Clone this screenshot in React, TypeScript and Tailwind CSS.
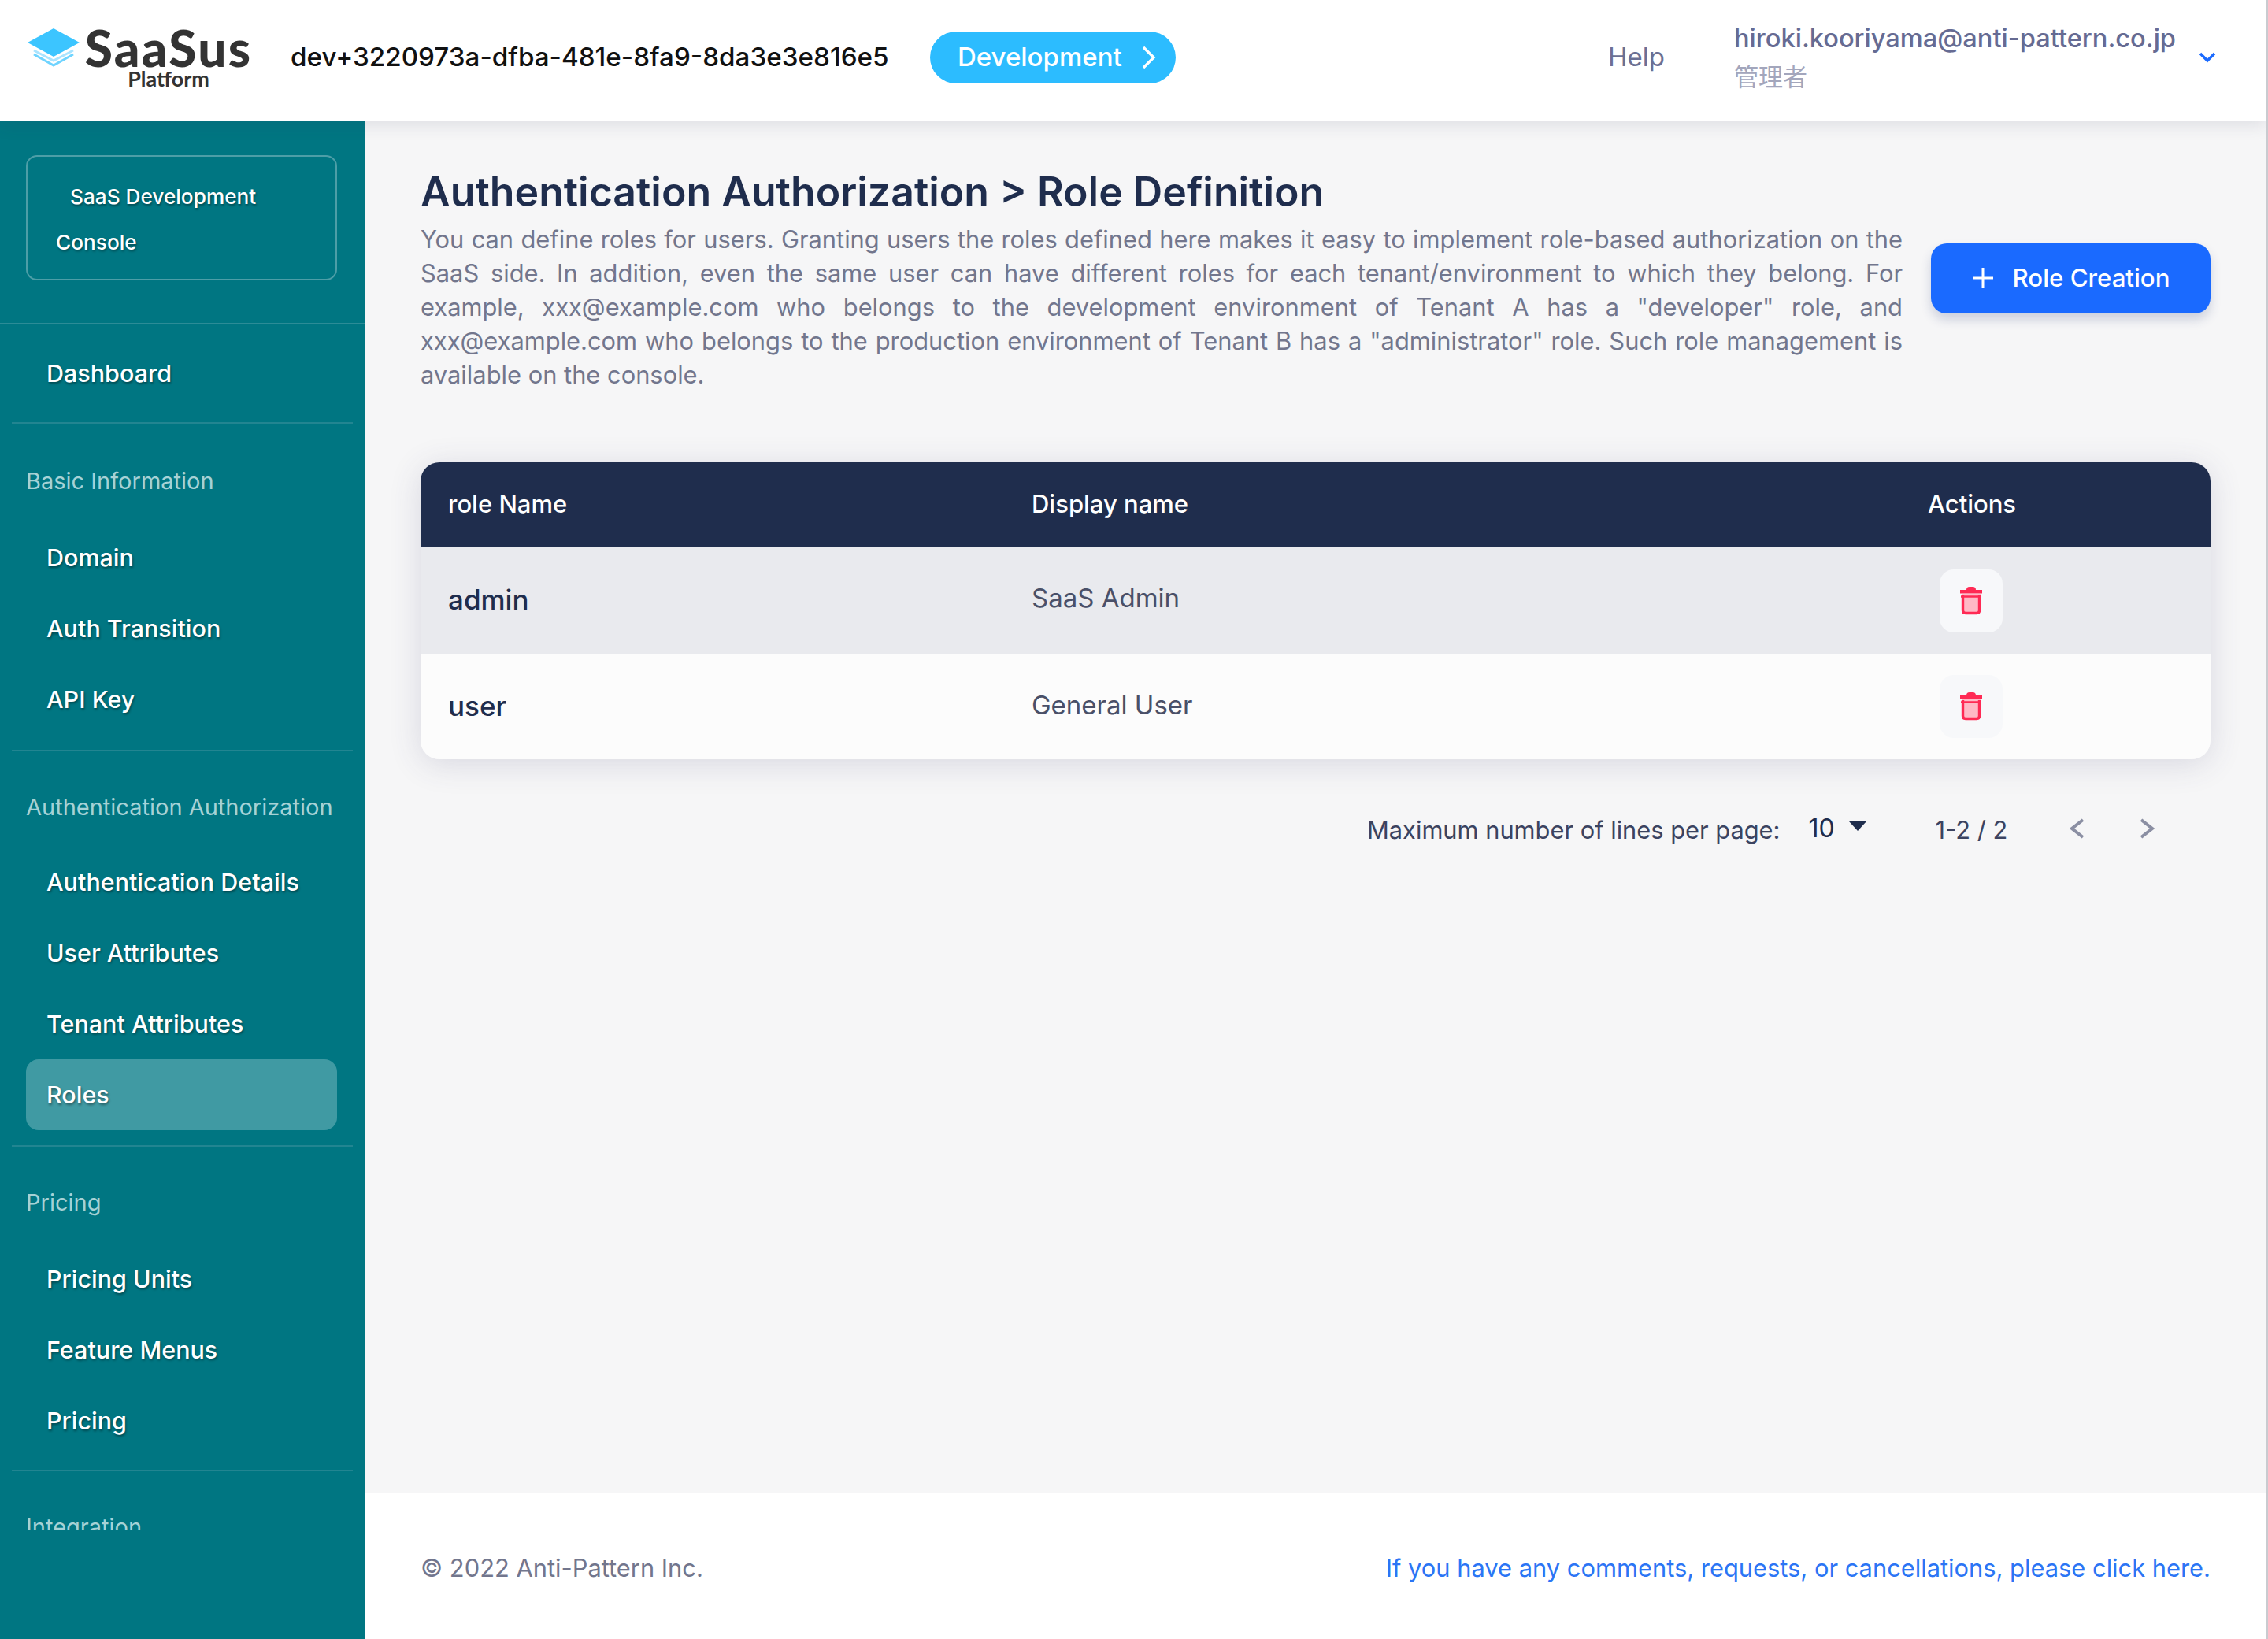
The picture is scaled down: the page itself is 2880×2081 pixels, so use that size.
import React from "react";

const font = { fontFamily: "Inter, 'Noto Sans CJK JP', sans-serif" };

function Logo() {
  return (
    <div className="flex items-start w-[320px] h-[90px] pl-[34px] pt-[8px] shrink-0">
      <svg width="68" height="50" viewBox="0 0 68 50" className="shrink-0">
        <path d="M9 28 L34 41 L59 28" fill="none" stroke="#a9e4ff" strokeWidth="3" />
        <path d="M9 33 L34 47 L59 33" fill="none" stroke="#6fd4ff" strokeWidth="3" />
        <path d="M34 0 L67 18 L34 36 L1 18 Z" fill="#3cc5ff" />
      </svg>
      <div className="flex flex-col items-center ml-[6px] w-[212px] shrink-0">
        <span className="text-[64px] leading-[50px] font-black text-[#333333] tracking-[2.2px]" style={{ fontFamily: "Lato, sans-serif" }}>SaaSus</span>
        <span className="text-[27px] leading-[24px] mt-[2px] font-bold text-[#333333]" style={{ fontFamily: "Lato, sans-serif" }}>Platform</span>
      </div>
    </div>
  );
}

function Item({ label, active }: { label: string; active?: boolean }) {
  return (
    <div className={`h-[90px] ml-[33px] mr-[35px] pl-[26px] flex items-center rounded-[16px] text-[30.5px] font-medium text-white [text-shadow:1px_2px_3px_rgba(0,0,0,0.4)] ${active ? "bg-[#409aa3]" : ""}`}>
      {label}
    </div>
  );
}

function Label({ label, top, bottom }: { label: string; top: string; bottom: string }) {
  return (
    <div className={`h-[52px] ${top} ${bottom} pl-[33px] flex items-center text-[29px] text-[#a6d2d6] whitespace-nowrap`}>
      {label}
    </div>
  );
}

function Divider({ top }: { top: string }) {
  return <div className={`h-[2px] mx-[15px] ${top} bg-[#228591]`} />;
}

function Trash() {
  return (
    <div className="w-[80px] h-[80px] rounded-[18px] flex items-center justify-center bg-[#f7f8fa] mb-[1px]">
      <svg width="30" height="38" viewBox="0 0 30 38">
        <path d="M3 10 H27 V31 Q27 36 22 36 H8 Q3 36 3 31 Z" fill="#ffb9c6" />
        <path d="M4.5 11 V31 Q4.5 34.5 8 34.5 H22 Q25.5 34.5 25.5 31 V11" fill="none" stroke="#ff2a54" strokeWidth="3.4" />
        <path d="M2 13.5 H28" stroke="#ff2a54" strokeWidth="2.5" />
        <path d="M1 5 H29 V9.5 H1 Z M9 5 Q9 1 13 1 H17 Q21 1 21 5 Z" fill="#ff2a54" />
      </svg>
    </div>
  );
}

function Row({ name, display, bg, nameShift, displayShift }: { name: string; display: string; bg: string; nameShift: string; displayShift: string }) {
  return (
    <div className={`flex items-center w-full ${bg}`}>
      <div className={`w-[741px] pl-[35px] text-[35px] font-medium text-[#1f2d4d] ${nameShift}`}>{name}</div>
      <div className={`w-[1188px] pl-[35px] text-[33px] text-[#4a5068] ${displayShift}`}>{display}</div>
      <Trash />
    </div>
  );
}

export default function App() {
  return (
    <div className="w-[2880px] h-[2081px] flex flex-col overflow-hidden bg-white border-r-[2px] border-[#c9cbd0]" style={font}>
      <header className="h-[153px] shrink-0 relative z-10 flex items-center pb-[7px] bg-white shadow-[0_6px_20px_rgba(50,55,90,0.12)]">
        <Logo />
        <div className="ml-[49px] text-[33.2px] font-medium text-[#111111] w-[812px] whitespace-nowrap">dev+3220973a-dfba-481e-8fa9-8da3e3e816e5</div>
        <div className="w-[312px] h-[66px] rounded-[33px] bg-[#2cbcff] flex items-center pl-[35px] text-[33px] font-medium text-white">
          Development
          <svg width="20" height="32" viewBox="0 0 20 32" className="ml-[24px]"><path d="M3 3 L16 16 L3 29" fill="none" stroke="#fff" strokeWidth="3.4" /></svg>
        </div>
        <div className="ml-[549px] text-[33px] text-[#6b7094] w-[160px]">Help</div>
        <div className="flex flex-col w-[580px]">
          <span className="text-[32.6px] leading-[50px] font-medium text-[#666b93] whitespace-nowrap">hiroki.kooriyama@anti-pattern.co.jp</span>
          <span className="text-[31px] leading-[50px] text-[#a3a6bc]">管理者</span>
        </div>
        <svg width="24" height="16" viewBox="0 0 24 16" className="ml-[9px]"><path d="M3 3 L12 12 L21 3" fill="none" stroke="#1a6aff" strokeWidth="3.4" /></svg>
      </header>

      <div className="flex flex-1 min-h-0">
        <aside className="w-[463px] shrink-0 bg-[#007682] flex flex-col">
          <div className="h-[1790px] overflow-hidden">
            <div className="pt-[44px] pb-[54px] pl-[33px] pr-[35px] border-b-[2px] border-[#2c8c97]">
              <div className="h-[159px] rounded-[14px] border-[2px] border-[#4d9ea7] pl-[36px] pt-[22px] text-[26.2px] font-medium leading-[58px] text-white [text-shadow:1px_2px_3px_rgba(0,0,0,0.4)]">
                <div className="pl-[18px]">SaaS Development</div>
                <div>Console</div>
              </div>
            </div>
            <div className="pt-[17px]"><Item label="Dashboard" /></div>
            <Divider top="mt-[17px]" />
            <Label label="Basic Information" top="mt-[47px]" bottom="mb-[26px]" />
            <Item label="Domain" />
            <Item label="Auth Transition" />
            <Item label="API Key" />
            <Divider top="mt-[19px]" />
            <Label label="Authentication Authorization" top="mt-[45px]" bottom="mb-[24px]" />
            <Item label="Authentication Details" />
            <Item label="User Attributes" />
            <Item label="Tenant Attributes" />
            <Item label="Roles" active />
            <Divider top="mt-[19px]" />
            <Label label="Pricing" top="mt-[45px]" bottom="mb-[26px]" />
            <Item label="Pricing Units" />
            <Item label="Feature Menus" />
            <Item label="Pricing" />
            <Divider top="mt-[17px]" />
            <Label label="Integration" top="mt-[45px]" bottom="mb-[26px]" />
          </div>
        </aside>

        <div className="flex-1 min-w-0 flex flex-col">
          <main className="flex-1 bg-[#f6f6f7] pl-[71px] pr-[71px] pt-[56px]">
            <h1 className="text-[51.8px] leading-[68px] font-semibold text-[#1f2d4d] whitespace-nowrap">Authentication Authorization &gt; Role Definition</h1>
            <div className="flex items-center mt-[5px] gap-[36px]">
              <p className="w-[1882px] shrink-0 text-[30.85px] leading-[43px] text-[#72768d] text-justify">
                You can define roles for users. Granting users the roles defined here makes it easy to implement role-based authorization on the SaaS side. In addition, even the same user can have different roles for each tenant/environment to which they belong. For example, xxx@example.com who belongs to the development environment of Tenant A has a "developer" role, and xxx@example.com who belongs to the production environment of Tenant B has a "administrator" role. Such role management is available on the console.
              </p>
              <button className="w-[355px] h-[89px] mb-[73px] rounded-[20px] bg-[#1a6aff] flex items-center justify-center gap-[24px] text-[31.2px] font-medium text-white shadow-[0_8px_14px_rgba(40,60,120,0.2)]">
                <svg width="28" height="28" viewBox="0 0 28 28"><path d="M14 1 V27 M1 14 H27" stroke="#fff" strokeWidth="3" /></svg>
                Role Creation
              </button>
            </div>
            <div className="mt-[90px] rounded-[24px] overflow-hidden shadow-[0_6px_40px_rgba(60,65,110,0.16)]">
              <div className="h-[108px] flex items-center bg-[#1f2d4d] text-[31px] font-medium text-white border-b-[1px] border-[#6f7890]">
                <div className="w-[741px] pl-[35px]">role Name</div>
                <div className="w-[1173px] pl-[35px]">Display name</div>
                <div>Actions</div>
              </div>
              <div className="h-[136px] flex"><Row name="admin" display="SaaS Admin" bg="bg-[#e9eaee]" nameShift="mb-[3px]" displayShift="mb-[6px]" /></div>
              <div className="h-[133px] flex"><Row name="user" display="General User" bg="bg-[#fcfcfc]" nameShift="mb-[2px]" displayShift="mb-[4px]" /></div>
            </div>
            <div className="mt-[70px] h-[40px] flex items-center text-[#3b4360] text-[30.8px]">
              <span className="ml-[1202px]">Maximum number of lines per page:</span>
              <span className="ml-[36px] text-[#1f2d4d] mb-[4px] text-[32px]">10</span>
              <svg width="22" height="12" viewBox="0 0 22 12" className="ml-[18px] mb-[10px]"><path d="M0 0 H22 L11 12 Z" fill="#1f2d4d" /></svg>
              <span className="ml-[88px]">1-2 / 2</span>
              <svg width="20" height="28" viewBox="0 0 20 28" className="ml-[79px] mb-[4px]"><path d="M17 3 L3 14 L17 25" fill="none" stroke="#8b8fa3" strokeWidth="4" /></svg>
              <svg width="20" height="28" viewBox="0 0 20 28" className="ml-[68px] mb-[4px]"><path d="M3 3 L17 14 L3 25" fill="none" stroke="#8b8fa3" strokeWidth="4" /></svg>
            </div>
          </main>
          <footer className="h-[185px] shrink-0 bg-white pl-[71px] pr-[71px] pt-[6px] flex items-center justify-between text-[30.85px]">
            <span className="text-[#72768d]">© 2022 Anti-Pattern Inc.</span>
            <span className="text-[#2b75f5]">If you have any comments, requests, or cancellations, please click here.</span>
          </footer>
        </div>
      </div>
    </div>
  );
}
